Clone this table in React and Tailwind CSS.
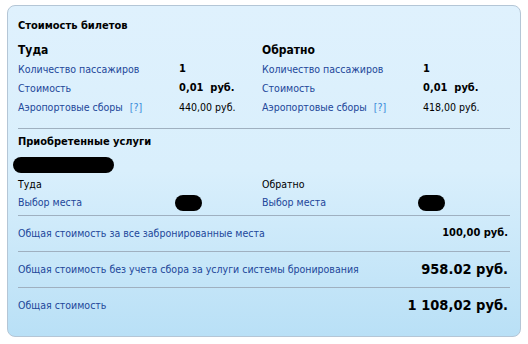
export default function App() {
  const font = { fontFamily: '"DejaVu Sans Condensed", "DejaVu Sans", sans-serif' }

  const Blob = ({ className }) => <div className={`bg-black rounded-full ${className}`} />

  const Direction = ({ title, fee, className }) => (
    <div className={className}>
      <div className="font-bold text-[12px] text-black h-[19px] leading-[19px]">{title}</div>
      <div className="flex h-[19px] items-center">
        <span className="text-[#22479a] w-[161px]">Количество пассажиров</span>
        <span className="font-bold text-black text-[11px]">1</span>
      </div>
      <div className="flex h-[19px] items-center">
        <span className="text-[#22479a] w-[161px]">Стоимость</span>
        <span className="font-bold text-black text-[11px]">0,01&nbsp; руб.</span>
      </div>
      <div className="flex h-[19px] items-center">
        <span className="text-[#22479a] w-[161px]">
          Аэропортовые сборы <span className="text-[#3a88d8] ml-1">[?]</span>
        </span>
        <span className="text-black">{fee}</span>
      </div>
    </div>
  )

  return (
    <div className="w-[528px] h-[344px] bg-white pt-[5px] pl-[7px]" style={font}>
      <div className="w-[514px] h-[332px] rounded-[8px] border border-[#b4c6d6] bg-gradient-to-b from-[#dff1fd] via-[#d9effc] to-[#b9e0f6] px-[10px] text-[10.5px]">
        <div className="font-bold text-black text-[11px] pt-[13px] h-[35px] leading-[14px]">Стоимость билетов</div>
        <div className="flex">
          <Direction title="Туда" fee="440,00 руб." className="w-[244px]" />
          <Direction title="Обратно" fee="418,00 руб." className="flex-1" />
        </div>
        <div className="border-t border-[#9fb0c0] mt-[11px]" />
        <div className="font-bold text-black text-[11px] h-[26px] flex items-center">Приобретенные услуги</div>
        <Blob className="w-[101px] h-[16px] -ml-[5px] mt-[2px]" />
        <div className="flex mt-[3px]">
          <div className="w-[244px]">
            <div className="h-[18px] flex items-center text-black">Туда</div>
            <div className="h-[18px] flex items-center">
              <span className="text-[#22479a] w-[157px]">Выбор места</span>
              <Blob className="w-[27px] h-[16px]" />
            </div>
          </div>
          <div className="flex-1">
            <div className="h-[18px] flex items-center text-black">Обратно</div>
            <div className="h-[18px] flex items-center">
              <span className="text-[#22479a] w-[156px]">Выбор места</span>
              <Blob className="w-[27px] h-[16px]" />
            </div>
          </div>
        </div>
        <div className="border-t border-[#9fb0c0] mt-[3px]" />
        <div className="flex justify-between items-center h-[35px] pr-[2px]">
          <span className="text-[#22479a]">Общая стоимость за все забронированные места</span>
          <span className="font-bold text-black text-[11px]">100,00 руб.</span>
        </div>
        <div className="border-t border-[#9fb0c0]" />
        <div className="flex justify-between items-center h-[35px] pr-[2px]">
          <span className="text-[#22479a]">Общая стоимость без учета сбора за услуги системы бронирования</span>
          <span className="font-bold text-black text-[14.5px]">958.02 руб.</span>
        </div>
        <div className="border-t border-[#9fb0c0]" />
        <div className="flex justify-between items-center h-[36px] pr-[2px]">
          <span className="text-[#22479a]">Общая стоимость</span>
          <span className="font-bold text-black text-[14.5px]">1 108,02 руб.</span>
        </div>
      </div>
    </div>
  )
}
